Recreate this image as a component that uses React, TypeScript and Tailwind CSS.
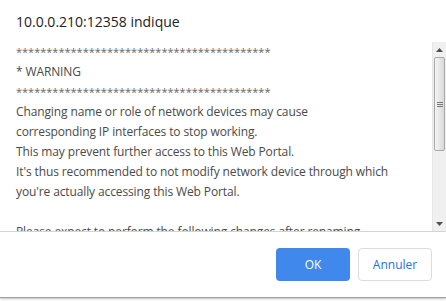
const STARS = "*".repeat(42);

const lines = [
  STARS,
  "* WARNING",
  STARS,
  "Changing name or role of network devices may cause",
  "corresponding IP interfaces to stop working.",
  "This may prevent further access to this Web Portal.",
  "It's thus recommended to not modify network device through which",
  "you're actually accessing this Web Portal.",
  "",
  "Please expect to perform the following changes after renaming",
  "network devices:",
];

export default function App() {
  return (
    <div className="w-[446px] h-[301px] bg-white overflow-hidden">
      <div className="flex flex-col h-[298px] bg-white border-b border-[#a0a0a0] shadow-[0_1px_2px_rgba(0,0,0,0.25)] font-['Open_Sans',sans-serif]">
        {/* Title */}
        <div className="h-[40px] pl-[16px] pt-[12px] text-[14px] leading-[20px] text-[#222]">
          10.0.0.210:12358 indique
        </div>

        {/* Message with scrollbar */}
        <div className="flex h-[192px] border-b border-[#d4d4d4]">
          <div className="flex-1 overflow-hidden pl-[16px] pt-[2px] text-[12px] leading-[20px] tracking-[-0.12px] text-[#4a4a4a]">
            {lines.map((l, i) => (
              <div
                key={i}
                className={l.startsWith("**") ? "h-[20px] text-[11px] tracking-normal text-[#666]" : "h-[20px]"}
              >
                {l || "\u00a0"}
              </div>
            ))}
          </div>
          <div className="w-[14px] mt-[2px] flex flex-col bg-[#f0f0f0] border-l border-[#e6e6e6]">
            <div className="h-[15px] flex items-center justify-center">
              <svg width="7" height="4" viewBox="0 0 7 4">
                <path d="M3.5 0 L7 4 L0 4 Z" fill="#505050" />
              </svg>
            </div>
            <div className="h-[94px] mx-[1px] rounded-[2px] border border-[#a8a8a8] bg-gradient-to-r from-[#f4f4f4] to-[#dadada] flex items-center justify-center">
              <div className="flex flex-col gap-[1px]">
                <div className="w-[6px] h-[1px] bg-[#777]" />
                <div className="w-[6px] h-[1px] bg-[#777]" />
                <div className="w-[6px] h-[1px] bg-[#777]" />
              </div>
            </div>
            <div className="flex-1" />
            <div className="h-[15px] flex items-center justify-center">
              <svg width="7" height="4" viewBox="0 0 7 4">
                <path d="M0 0 L7 0 L3.5 4 Z" fill="#505050" />
              </svg>
            </div>
          </div>
        </div>

        {/* Buttons */}
        <div className="flex justify-end gap-[8px] pr-[14px] pt-[16px]">
          <button className="w-[74px] h-[33px] rounded-[4px] bg-[#4088ec] text-white text-[12px]">
            OK
          </button>
          <button className="w-[74px] h-[33px] rounded-[4px] border border-[#dadce0] bg-white text-[#1a73e8] text-[12px]">
            Annuler
          </button>
        </div>
      </div>
    </div>
  );
}
